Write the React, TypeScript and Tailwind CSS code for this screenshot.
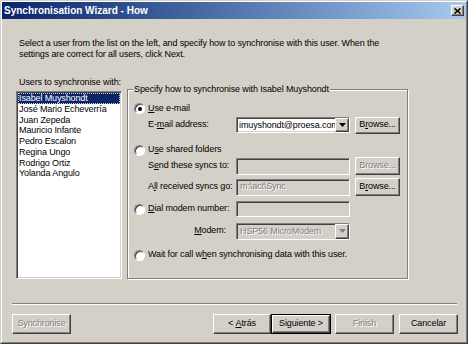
import type { ReactNode } from "react";

const sunken =
  "border border-t-[#808080] border-l-[#808080] border-r-white border-b-white shadow-[inset_1px_1px_0_#404040,inset_-1px_-1px_0_#d4d0c8]";
const raised =
  "border border-t-white border-l-white border-r-[#404040] border-b-[#404040] shadow-[inset_-1px_-1px_0_#808080]";
const grayText = "text-[#808080] [text-shadow:1px_1px_0_#fff]";

const users = [
  "Isabel Muyshondt",
  "José Mario Echeverría",
  "Juan Zepeda",
  "Mauricio Infante",
  "Pedro Escalon",
  "Regina Ungo",
  "Rodrigo Ortiz",
  "Yolanda Angulo",
];

function Radio({ checked }: { checked?: boolean }) {
  return (
    <span className="w-[11px] h-[11px] shrink-0 rounded-full bg-white border border-t-[#808080] border-l-[#808080] border-r-white border-b-white shadow-[inset_1px_1px_0_#404040] flex items-center justify-center">
      {checked && <span className="w-[4px] h-[4px] rounded-full bg-black" />}
    </span>
  );
}

function Button({
  children,
  disabled,
  isDefault,
  className,
}: {
  children: ReactNode;
  disabled?: boolean;
  isDefault?: boolean;
  className: string;
}) {
  const face = (
    <div
      className={`${raised} h-full w-full flex items-center justify-center whitespace-pre bg-[#d4d0c8] ${
        disabled ? grayText : "text-black"
      }`}
    >
      {children}
    </div>
  );
  if (isDefault)
    return <div className={`${className} border border-black`}>{face}</div>;
  return <div className={className}>{face}</div>;
}

function DropArrow({ disabled }: { disabled?: boolean }) {
  return (
    <div
      className={`${raised} w-[14px] h-full shrink-0 bg-[#d4d0c8] flex items-center justify-center`}
    >
      <svg width="7" height="4" viewBox="0 0 7 4">
        <polygon points="0,0 7,0 3.5,4" fill={disabled ? "#808080" : "#000"} />
      </svg>
    </div>
  );
}

function App() {
  return (
    <div className="w-[468px] h-[344px] bg-[#d4d0c8] font-['Liberation_Sans',Arial,sans-serif] text-[9px] tracking-[-0.12px] text-black border border-t-[#d4d0c8] border-l-[#d4d0c8] border-r-[#404040] border-b-[#404040]">
      <div className="w-full h-full flex flex-col border border-t-white border-l-white border-r-[#808080] border-b-[#808080]">
        <div className="h-[17px] shrink-0 flex items-center justify-between pl-[2px] pr-[2px] bg-gradient-to-r from-[#0a246a] to-[#a6caf0]">
          <span className="text-white font-bold text-[10px] tracking-normal leading-none">
            Synchronisation Wizard - How
          </span>
          <div className={`${raised} w-[13px] h-[11px] bg-[#d4d0c8] flex items-center justify-center`}>
            <svg width="7" height="6" viewBox="0 0 7 6">
              <path d="M0.5 0.5 L6.5 5.5 M6.5 0.5 L0.5 5.5" stroke="#000" strokeWidth="1.6" />
            </svg>
          </div>
        </div>

        <div className="flex-1 flex flex-col pl-[14px]">
          <p className="mt-[19px] ml-[3px] leading-[11px]">
            Select a user from the list on the left, and specify how to synchronise with this user. When the
            <br />
            settings are correct for all users, click Next.
          </p>

          <div className="mt-[17px] flex items-start gap-[5px]">
            <div className="w-[106px]">
              <div className="ml-[3px] h-[11px] leading-[11px] whitespace-nowrap">
                Users to synchronise with:
              </div>
              <div className={`${sunken} mt-[3px] h-[188px] bg-white p-[1px]`}>
                {users.map((u, i) => (
                  <div
                    key={u}
                    className={`h-[10.75px] leading-[10.75px] pl-[1px] whitespace-nowrap ${
                      i === 0
                        ? "bg-[#0a246a] text-white outline outline-1 outline-dotted outline-[#d4d0c8] -outline-offset-1"
                        : ""
                    }`}
                  >
                    {u}
                  </div>
                ))}
              </div>
            </div>

            <div className="mt-[12px] w-[281px] h-[190px] relative border border-[#808080] shadow-[inset_1px_1px_0_#fff,1px_1px_0_#fff]">
              <span className="absolute left-[5px] -top-[6px] px-[1px] bg-[#d4d0c8] leading-[11px] whitespace-nowrap">
                Specify how to synchronise with Isabel Muyshondt
              </span>
              <div className="pt-[11px] pl-[6px] flex flex-col">
                <div className="h-[15px] flex items-center">
                  <Radio checked />
                  <span className="ml-[3px]">
                    <u>U</u>se e-mail
                  </span>
                </div>
                <div className="h-[18px] flex items-center pl-[14px]">
                  <span className="w-[88px]">
                    E-<u>m</u>ail address:
                  </span>
                  <div className={`${sunken} w-[114px] h-[16px] bg-white flex`}>
                    <span className="flex-1 overflow-hidden whitespace-nowrap leading-[14px] pl-[2px]">
                      imuyshondt@proesa.com
                    </span>
                    <DropArrow />
                  </div>
                  <Button className="ml-[5px] w-[45px] h-[17px]">
                    B<u>r</u>owse...
                  </Button>
                </div>

                <div className="mt-[9px] h-[14px] flex items-center">
                  <Radio />
                  <span className="ml-[3px]">
                    U<u>s</u>e shared folders
                  </span>
                </div>
                <div className="h-[18px] flex items-center pl-[14px]">
                  <span className="w-[88px]">
                    S<u>e</u>nd these syncs to:
                  </span>
                  <div className={`${sunken} w-[114px] h-[17px]`} />
                  <Button disabled className="ml-[5px] w-[45px] h-[18px]">
                    Browse...
                  </Button>
                </div>
                <div className="mt-[3px] h-[18px] flex items-center pl-[14px]">
                  <span className="w-[88px]">
                    A<u>l</u>l received syncs go:
                  </span>
                  <div className={`${sunken} w-[114px] h-[17px] flex items-center pl-[3px] ${grayText}`}>
                    m:\act\Sync
                  </div>
                  <Button className="ml-[5px] w-[45px] h-[18px]">
                    B<u>r</u>owse...
                  </Button>
                </div>

                <div className="mt-[4px] h-[18px] flex items-center">
                  <Radio />
                  <span className="ml-[3px] w-[88px]">
                    <u>D</u>ial modem number:
                  </span>
                  <div className={`${sunken} w-[114px] h-[16px]`} />
                </div>
                <div className="mt-[4px] h-[18px] flex items-center pl-[14px]">
                  <span className="w-[88px] text-right pr-[10px]">
                    <u>M</u>odem:
                  </span>
                  <div className={`${sunken} w-[114px] h-[17px] flex`}>
                    <span className={`flex-1 pl-[3px] leading-[15px] whitespace-nowrap overflow-hidden ${grayText}`}>
                      HSP56 MicroModem
                    </span>
                    <DropArrow disabled />
                  </div>
                </div>

                <div className="mt-[8px] h-[14px] flex items-center">
                  <Radio />
                  <span className="ml-[3px]">
                    Wait for call w<u>h</u>en synchronising data with this user.
                  </span>
                </div>
              </div>
            </div>
          </div>

          <div className="mt-[24px] -ml-[4px] w-[445px] h-[2px] border-t border-t-[#808080] border-b border-b-white" />

          <div className="mt-[9px] -ml-[4px] w-[446px] h-[20px] flex justify-between">
            <Button disabled className="w-[59px] h-[20px]">
              Synchronise
            </Button>
            <div className="flex">
              <Button className="w-[58px] h-[20px]">
                {"< "}
                <u>A</u>trás
              </Button>
              <Button isDefault className="w-[60px] h-[20px]">
                Siguiente {">"}
              </Button>
              <Button disabled className="ml-[4px] w-[59px] h-[20px]">
                Finish
              </Button>
              <Button className="ml-[5px] w-[59px] h-[20px]">
                Cancelar
              </Button>
            </div>
          </div>
        </div>
      </div>
    </div>
  );
}

export default App;
